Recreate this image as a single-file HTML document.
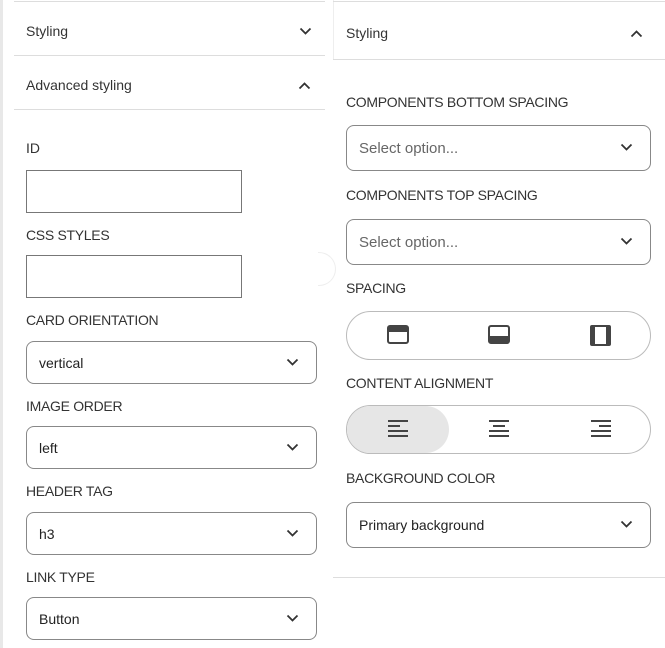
<!DOCTYPE html>
<html><head><style>
*{margin:0;padding:0;box-sizing:border-box}
body{width:665px;height:648px;background:#fff;font-family:"Liberation Sans",sans-serif;color:#333;position:relative;overflow:hidden}
.a{position:absolute}
.t{position:absolute;font-size:14px;line-height:16px;transform:translateY(-8px)}
.l{letter-spacing:-0.3px}
.hr{position:absolute;height:1px;background:#ddd}
.inp{position:absolute;border:1px solid #777;background:#fff}
.sel{position:absolute;border:1px solid #888;border-radius:8px;background:#fff;font-size:14px;display:flex;align-items:center;padding-left:12px;color:#222}
.sel svg{position:absolute;right:17px;top:50%;margin-top:-5px}
.pill{position:absolute;border:1px solid #bbb;border-radius:25px;overflow:hidden}
</style></head><body>
<div class="a" style="left:0;top:0;width:3px;height:648px;background:#e8e8e8"></div>
<div class="hr" style="left:14px;top:1px;width:311px"></div>
<div class="t" style="left:26px;top:31px">Styling</div>
<svg class="a" style="left:299px;top:27px" width="13" height="8"><path d="M1.5 1.5l5 5 5-5" fill="none" stroke="#333" stroke-width="1.8"/></svg>
<div class="hr" style="left:14px;top:55px;width:311px"></div>
<div class="t" style="left:26px;top:85px">Advanced styling</div>
<svg class="a" style="left:298px;top:82px" width="13" height="8"><path d="M1.5 6.5l5-5 5 5" fill="none" stroke="#333" stroke-width="1.8"/></svg>
<div class="hr" style="left:14px;top:109px;width:311px"></div>
<div class="t" style="left:26px;top:148px">ID</div>
<div class="inp" style="left:26px;top:170px;width:216px;height:43px"></div>
<div class="t l" style="left:26px;top:235px">CSS STYLES</div>
<div class="inp" style="left:26px;top:255px;width:216px;height:43px"></div>
<div class="t l" style="left:26px;top:320px">CARD ORIENTATION</div>
<div class="sel" style="left:26px;top:341px;width:291px;height:43px">vertical<svg width="13" height="8"><path d="M1.5 1.5l5 5 5-5" fill="none" stroke="#333" stroke-width="1.8"/></svg></div>
<div class="t l" style="left:26px;top:406px">IMAGE ORDER</div>
<div class="sel" style="left:26px;top:426px;width:291px;height:43px">left<svg width="13" height="8"><path d="M1.5 1.5l5 5 5-5" fill="none" stroke="#333" stroke-width="1.8"/></svg></div>
<div class="t l" style="left:26px;top:491px">HEADER TAG</div>
<div class="sel" style="left:26px;top:512px;width:291px;height:43px">h3<svg width="13" height="8"><path d="M1.5 1.5l5 5 5-5" fill="none" stroke="#333" stroke-width="1.8"/></svg></div>
<div class="t l" style="left:26px;top:577px">LINK TYPE</div>
<div class="sel" style="left:26px;top:597px;width:291px;height:43px">Button<svg width="13" height="8"><path d="M1.5 1.5l5 5 5-5" fill="none" stroke="#333" stroke-width="1.8"/></svg></div>

<div class="a" style="left:333px;top:0;width:1px;height:59px;background:#eee"></div>
<div class="a" style="left:318px;top:252px;width:18px;height:34px;border-radius:0 17px 17px 0;border:1px solid #eee;border-left:none"></div>
<div class="hr" style="left:333px;top:1px;width:332px"></div>
<div class="t" style="left:346px;top:33px">Styling</div>
<svg class="a" style="left:630px;top:30px" width="13" height="8"><path d="M1.5 6.5l5-5 5 5" fill="none" stroke="#333" stroke-width="1.8"/></svg>
<div class="hr" style="left:333px;top:59px;width:332px"></div>
<div class="t l" style="left:346px;top:102px">COMPONENTS BOTTOM SPACING</div>
<div class="sel" style="left:346px;top:125px;width:305px;height:46px;color:#666;font-size:15px">Select option...<svg width="13" height="8"><path d="M1.5 1.5l5 5 5-5" fill="none" stroke="#333" stroke-width="1.8"/></svg></div>
<div class="t l" style="left:346px;top:195px">COMPONENTS TOP SPACING</div>
<div class="sel" style="left:346px;top:219px;width:305px;height:46px;color:#666;font-size:15px">Select option...<svg width="13" height="8"><path d="M1.5 1.5l5 5 5-5" fill="none" stroke="#333" stroke-width="1.8"/></svg></div>
<div class="t l" style="left:346px;top:288px">SPACING</div>
<div class="pill" style="left:346px;top:311px;width:305px;height:49px"></div>
<svg class="a" style="left:387px;top:325px" width="22" height="19"><rect x="1" y="1" width="20" height="17" rx="2" fill="#fff" stroke="#444" stroke-width="2"/><rect x="1" y="1" width="20" height="6" fill="#444"/></svg>
<svg class="a" style="left:488px;top:325px" width="22" height="19"><rect x="1" y="1" width="20" height="17" rx="2" fill="#fff" stroke="#444" stroke-width="2"/><rect x="1" y="11" width="20" height="7" fill="#444"/></svg>
<svg class="a" style="left:590px;top:325px" width="21" height="21"><rect x="1" y="1" width="19" height="19" rx="1" fill="#fff" stroke="#444" stroke-width="2"/><rect x="1" y="1" width="4" height="19" fill="#444"/><rect x="16" y="1" width="4" height="19" fill="#444"/></svg>
<div class="t l" style="left:346px;top:383px">CONTENT ALIGNMENT</div>
<div class="pill" style="left:346px;top:405px;width:305px;height:49px"><div style="width:102px;height:100%;background:#e6e6e6;border-radius:0 25px 25px 0"></div></div>
<svg class="a" style="left:388px;top:419px" width="20" height="20" stroke="#444" stroke-width="2"><path d="M0 2h20M0 7h12M0 12h20M0 17h20"/></svg>
<svg class="a" style="left:489px;top:419px" width="20" height="20" stroke="#444" stroke-width="2"><path d="M0 2h20M4 7h12M0 12h20M0 17h20"/></svg>
<svg class="a" style="left:591px;top:419px" width="20" height="20" stroke="#444" stroke-width="2"><path d="M0 2h20M8 7h12M0 12h20M0 17h20"/></svg>
<div class="t l" style="left:346px;top:478px">BACKGROUND COLOR</div>
<div class="sel" style="left:346px;top:502px;width:305px;height:46px">Primary background<svg width="13" height="8"><path d="M1.5 1.5l5 5 5-5" fill="none" stroke="#333" stroke-width="1.8"/></svg></div>
<div class="hr" style="left:333px;top:577px;width:332px"></div>
</body></html>
